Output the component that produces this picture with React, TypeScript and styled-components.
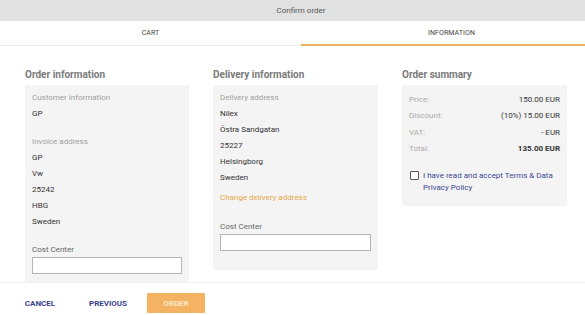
import React from "react";
import styled, { createGlobalStyle } from "styled-components";

const Global = createGlobalStyle`
  html, body { margin: 0; padding: 0; overflow: hidden; background: #fff; }
  body { font-family: Roboto, "Liberation Sans", Arial, sans-serif; -webkit-font-smoothing: antialiased; }
  * { box-sizing: border-box; }
`;

const Dialog = styled.div`
  width: 602px;
  height: 315px;
  display: flex;
  flex-direction: column;
  background: #fff;
`;

const Header = styled.div`
  height: 21px;
  flex: none;
  background: #e1e1e1;
  color: #555;
  font-size: 8px;
  display: flex;
  align-items: center;
  justify-content: center;
`;

const Tabs = styled.div`
  height: 25px;
  flex: none;
  display: grid;
  grid-template-columns: 1fr 1fr;
`;

const Tab = styled.div<{ $active?: boolean }>`
  display: flex;
  align-items: center;
  justify-content: center;
  font-size: 7px;
  color: #444;
  letter-spacing: 0.1px;
  border-bottom: ${(p) => (p.$active ? "2px solid #e9b25f" : "1px solid #ececec")};
  padding-top: ${(p) => (p.$active ? "1px" : "0")};
`;

const Scroll = styled.div`
  flex: 1;
  overflow: hidden;
  padding: 22px 0 0 25px;
`;

const Columns = styled.div`
  display: grid;
  grid-template-columns: 164px 165px 165px;
  column-gap: 24px;
  align-items: start;
`;

const Column = styled.section`
  display: flex;
  flex-direction: column;
`;

const SectionTitle = styled.h2`
  margin: 0 0 3px;
  font-size: 10px;
  line-height: 14px;
  font-weight: 700;
  color: #7a7a7a;
`;

const Panel = styled.div<{ $pt?: number; $pb?: number; $px?: number }>`
  background: #f4f4f4;
  padding: ${(p) => `${p.$pt ?? 5}px ${p.$px ?? 7}px ${p.$pb ?? 19}px`};
`;

const Group = styled.div<{ $mt?: number }>`
  margin-top: ${(p) => p.$mt ?? 0}px;
`;

const Label = styled.div`
  font-size: 8px;
  line-height: 16px;
  color: #a0a0a0;
`;

const Value = styled.div`
  font-size: 8px;
  line-height: 16px;
  color: #333;
`;

const Link = styled.div`
  margin-top: 4px;
  font-size: 8px;
  line-height: 16px;
  color: #e8a84c;
`;

const FieldLabel = styled.div<{ $mt: number }>`
  margin-top: ${(p) => p.$mt}px;
  font-size: 8px;
  line-height: 14px;
  color: #666;
`;

const Input = styled.div`
  height: 17px;
  background: #fff;
  border: 1px solid #b4b4b4;
`;

const SumRow = styled.div`
  display: flex;
  justify-content: space-between;
  font-size: 8px;
  line-height: 16.3px;
`;

const SumLabel = styled.span`
  color: #ababab;
`;

const SumValue = styled.span<{ $bold?: boolean }>`
  color: #333;
  font-weight: ${(p) => (p.$bold ? 700 : 400)};
`;

const Accept = styled.label`
  margin-top: 13px;
  display: flex;
  align-items: flex-start;
  gap: 4px;
  padding-left: 1px;
`;

const Box = styled.span`
  flex: none;
  width: 9px;
  height: 9px;
  margin-top: 1px;
  border: 1.5px solid #555;
  border-radius: 1px;
  background: #fff;
`;

const AcceptText = styled.span`
  font-size: 8px;
  line-height: 12px;
  color: #3c4795;
`;

const Footer = styled.div`
  height: 33px;
  flex: none;
  border-top: 1px solid #efefef;
  display: flex;
  align-items: flex-start;
  gap: 10px;
  padding: 10px 0 0 11px;
  background: #fff;
`;

const Button = styled.button<{ $primary?: boolean }>`
  min-width: 58px;
  height: 20px;
  padding: 0 8px;
  border: none;
  border-radius: 1px;
  font-family: inherit;
  font-size: 8px;
  font-weight: 700;
  background: ${(p) => (p.$primary ? "#f4b363" : "transparent")};
  color: ${(p) => (p.$primary ? "#fde7c6" : "#3a3f8e")};
`;

export default function App() {
  return (
    <>
      <Global />
      <Dialog>
        <Header>Confirm order</Header>
        <Tabs>
          <Tab>CART</Tab>
          <Tab $active>INFORMATION</Tab>
        </Tabs>
        <Scroll>
          <Columns>
            <Column>
              <SectionTitle>Order information</SectionTitle>
              <Panel>
                <Group>
                  <Label>Customer information</Label>
                  <Value>GP</Value>
                </Group>
                <Group $mt={12}>
                  <Label>Invoice address</Label>
                  <Value>GP</Value>
                  <Value>Vw</Value>
                  <Value>25242</Value>
                  <Value>HBG</Value>
                  <Value>Sweden</Value>
                </Group>
                <FieldLabel $mt={13}>Cost Center</FieldLabel>
                <Input />
              </Panel>
            </Column>
            <Column>
              <SectionTitle>Delivery information</SectionTitle>
              <Panel>
                <Label>Delivery address</Label>
                <Value>Nilex</Value>
                <Value>Östra Sandgatan</Value>
                <Value>25227</Value>
                <Value>Helsingborg</Value>
                <Value>Sweden</Value>
                <Link>Change delivery address</Link>
                <FieldLabel $mt={14}>Cost Center</FieldLabel>
                <Input />
              </Panel>
            </Column>
            <Column>
              <SectionTitle>Order summary</SectionTitle>
              <Panel $pt={7} $pb={12} $px={7}>
                <SumRow>
                  <SumLabel>Price:</SumLabel>
                  <SumValue>150.00 EUR</SumValue>
                </SumRow>
                <SumRow>
                  <SumLabel>Discount:</SumLabel>
                  <SumValue>(10%) 15.00 EUR</SumValue>
                </SumRow>
                <SumRow>
                  <SumLabel>VAT:</SumLabel>
                  <SumValue>- EUR</SumValue>
                </SumRow>
                <SumRow>
                  <SumLabel>Total:</SumLabel>
                  <SumValue $bold>135.00 EUR</SumValue>
                </SumRow>
                <Accept>
                  <Box />
                  <AcceptText>I have read and accept Terms &amp; Data Privacy Policy</AcceptText>
                </Accept>
              </Panel>
            </Column>
          </Columns>
        </Scroll>
        <Footer>
          <Button>CANCEL</Button>
          <Button>PREVIOUS</Button>
          <Button $primary>ORDER</Button>
        </Footer>
      </Dialog>
    </>
  );
}
